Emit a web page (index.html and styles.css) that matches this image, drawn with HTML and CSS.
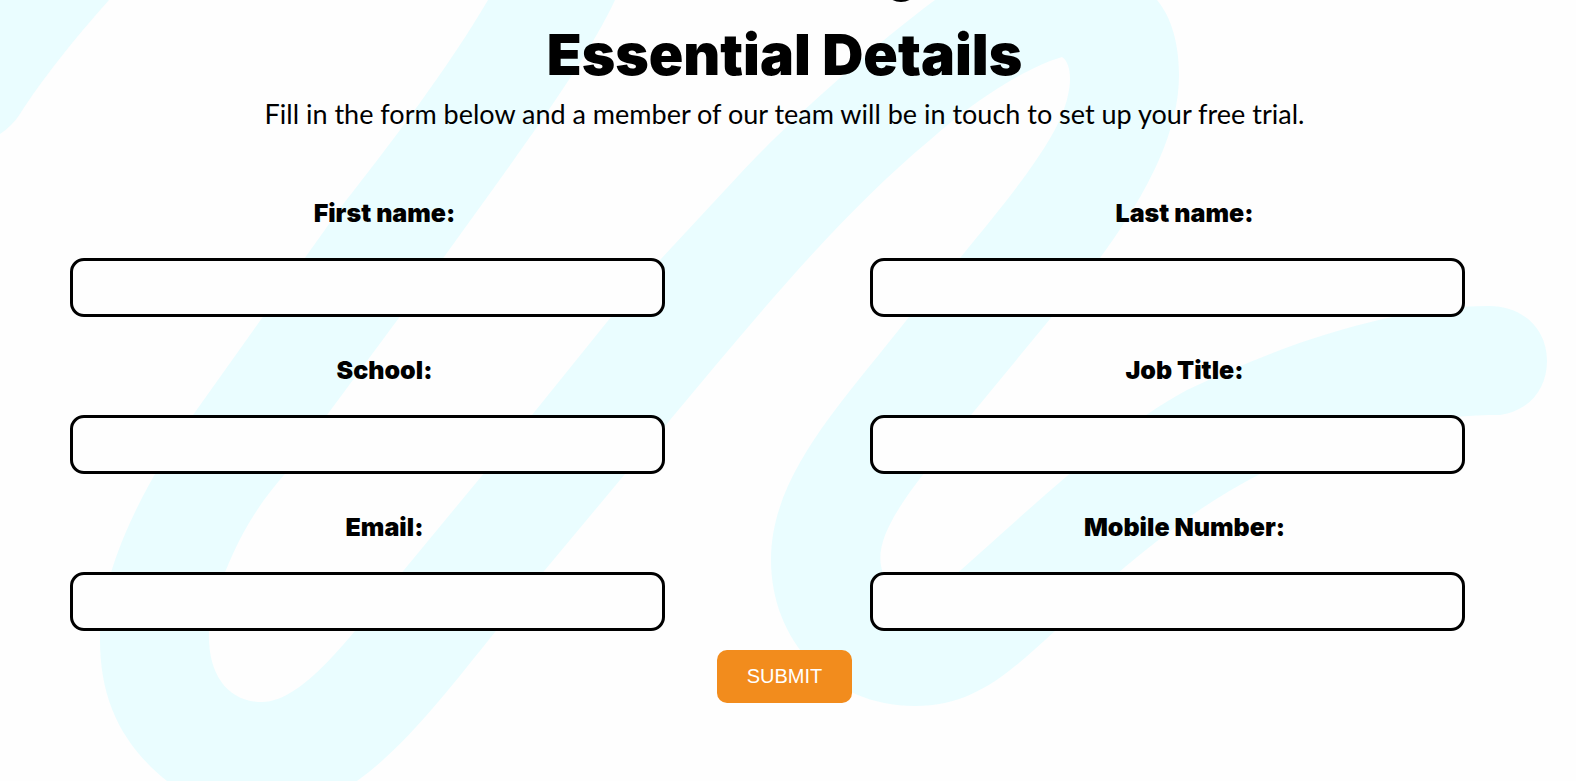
FILE: index.html
```html
<!DOCTYPE html>
<html lang="en">
<head>
<meta charset="utf-8">
<meta name="viewport" content="width=device-width, initial-scale=1">
<title>Essential Details</title>
<link rel="stylesheet" href="styles.css">
</head>
<body>
<main class="signup">
  <svg class="swirl" viewBox="0 0 1576 781" preserveAspectRatio="xMidYMin slice" aria-hidden="true">
    <path class="swirl-fill" d="M0 0H109C75 38 40 82 20 114Q12 126 0 134Z"/>
    <path class="swirl-fill" d="M488 0C450 65 390 145 344 203L193 415C150 475 100 565 100 640C100 700 122 745 167 781H357C405 747 450 688 495 632L545 570L670 420C760 312 840 215 930 140C975 100 1025 68 1062 57C1070 62 1072 78 1068 95C1060 135 1020 185 960 258L909 317C840 405 771 475 771 560C771 640 830 706 915 706C975 706 1010 672 1056 630C1115 573 1185 512 1260 474C1345 425 1440 415 1500 415C1530 411 1547 388 1547 361C1547 328 1522 306 1489 306C1400 306 1290 340 1187 390C1110 432 1040 500 961 570C930 597 887 600 882 570C872 535 908 492 971 415L1050 319L1100 258C1150 190 1179 130 1179 75C1179 45 1172 18 1157 0H935C870 48 780 130 739 175L660 260L611 317L532 415L404 570C357 628 305 702 262 702C228 702 209 675 209 637C209 605 215 592 226 570C242 530 262 500 284 475L327 415L444 257C510 165 585 65 615 0Z"/>
    <ellipse cx="901" cy="-8" rx="14" ry="10"/>
  </svg>

  <header class="intro">
    <h1 class="title">Essential Details</h1>
    <p class="lead">Fill in the form below and a member of our team will be in touch to set up your free trial.</p>
  </header>

  <form class="form" action="#" method="post">
    <div class="fields">
      <div class="field"><label class="label" for="first-name">First name:</label><input class="input" id="first-name" name="first-name" type="text"></div>
      <div class="field"><label class="label" for="last-name">Last name:</label><input class="input" id="last-name" name="last-name" type="text"></div>
      <div class="field"><label class="label" for="school">School:</label><input class="input" id="school" name="school" type="text"></div>
      <div class="field"><label class="label" for="job-title">Job Title:</label><input class="input" id="job-title" name="job-title" type="text"></div>
      <div class="field"><label class="label" for="email">Email:</label><input class="input" id="email" name="email" type="email"></div>
      <div class="field"><label class="label" for="mobile">Mobile Number:</label><input class="input" id="mobile" name="mobile" type="tel"></div>
    </div>
    <button class="submit" type="submit">SUBMIT</button>
  </form>
</main>
</body>
</html>
```
FILE: styles.css
```css
* { box-sizing: border-box; }

body {
  margin: 0;
  background: #fefefe;
  color: #000;
  font-family: Lato, "Open Sans", sans-serif;
}

.signup {
  position: relative;
  min-height: 100vh;
  overflow: hidden;
  padding: 20px 77px 20px 70px;
}

.swirl {
  position: absolute;
  inset: 0;
  z-index: -1;
  width: 100%;
  height: 100%;
}

.swirl-fill { fill: #eafdff; }

.intro { text-align: center; }

.title {
  margin: 0;
  font-family: Inter, Lato, sans-serif;
  font-size: 57px;
  font-weight: 900;
  line-height: 70px;
}

.lead {
  margin: 4px 0 0;
  font-size: 27px;
  line-height: 40px;
}

.form {
  display: flex;
  flex-direction: column;
  align-items: center;
  gap: 19px;
  margin-top: 64px;
}

.fields {
  display: grid;
  grid-template-columns: repeat(2, minmax(0, 1fr));
  gap: 38px 171px;
  width: 100%;
}

.field {
  display: flex;
  flex-direction: column;
  gap: 30px;
}

.label {
  font-family: Inter, Lato, sans-serif;
  font-size: 25px;
  font-weight: 900;
  line-height: 30px;
  text-align: center;
}

.input {
  width: calc(100% - 34px);
  height: 59px;
  padding: 0 16px;
  border: 3px solid #000;
  border-radius: 14px;
  background: #fefefe;
  font: inherit;
  font-size: 20px;
}

.submit {
  padding: 15px 30px;
  border: 0;
  border-radius: 10px;
  background: #f28c1d;
  color: #fff;
  font-family: "Liberation Sans", Arial, sans-serif;
  font-size: 20px;
  line-height: 23px;
}
```
